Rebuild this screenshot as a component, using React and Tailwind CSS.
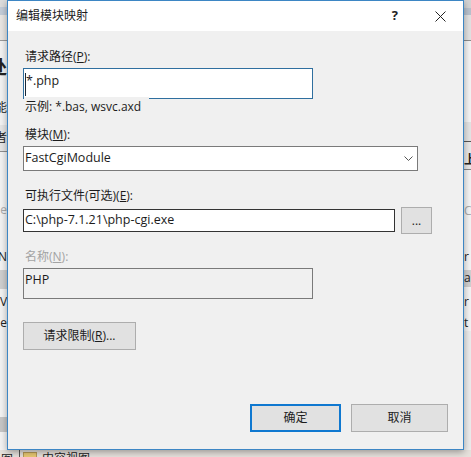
import React from 'react';

const Label = ({ text, hotkey, disabled, className = '' }) => (
  <div className={`h-[16px] leading-[16px] text-[12px] whitespace-nowrap ${disabled ? 'text-[#a3a3a3]' : 'text-[#1c1c1c]'} ${className}`}>
    {text}(<span className="underline">{hotkey}</span>):
  </div>
);

const WinButton = ({ children, primary, className = '' }) => (
  <button
    className={`flex items-center justify-center bg-[#e1e1e1] text-[12px] text-[#1c1c1c] ${primary ? 'border-2 border-[#0f78d0]' : 'border border-[#adadad]'} ${className}`}
  >
    {children}
  </button>
);

// slivers of the IIS manager window behind the dialog
const LeftStrip = () => (
  <div className="w-[7px] flex flex-col overflow-hidden bg-[#f3f3f3] text-[12px] leading-[16px] text-[#222]">
    <div className="h-[7px] shrink-0 bg-[#dcdcdc]" />
    <div className="h-[8px] shrink-0 bg-[#c3ccd8]" />
    <div className="h-[26px] shrink-0 bg-[#e9e6e3] border-b border-[#9a9a9a]" />
    <div className="h-[17px] shrink-0" />
    <div className="h-[18px] shrink-0 flex justify-end text-[18px] leading-[18px] font-bold"><span>处</span></div>
    <div className="h-[24px] shrink-0" />
    <div className="h-[16px] shrink-0 flex justify-end"><span>能</span></div>
    <div className="h-[9px] shrink-0" />
    <div className="h-[27px] shrink-0 flex justify-end items-center bg-[#e6e6e6] border-b border-[#8f8f8f]"><span>者</span></div>
    <div className="h-[50px] shrink-0" />
    <div className="h-[16px] shrink-0 flex justify-end text-[#aaa]"><span>e</span></div>
    <div className="h-[31px] shrink-0" />
    <div className="h-[16px] shrink-0 flex justify-end"><span>N</span></div>
    <div className="h-[5px] shrink-0" />
    <div className="h-[19px] shrink-0 bg-[#cfcfcf]" />
    <div className="h-[5px] shrink-0" />
    <div className="h-[16px] shrink-0 flex"><span>V</span></div>
    <div className="h-[5px] shrink-0" />
    <div className="h-[16px] shrink-0 flex justify-end"><span>e</span></div>
    <div className="h-[86px] shrink-0" />
    <div className="h-[15px] shrink-0 bg-[#c6c6c6]" />
    <div className="flex-1" />
  </div>
);

const RightStrip = () => (
  <div className="w-[7px] flex flex-col overflow-hidden bg-[#f4f4f4] text-[12px] leading-[16px] text-[#222]">
    <div className="h-[8px] shrink-0 bg-[#d4d4d4]" />
    <div className="h-[7px] shrink-0 bg-[#b9c2ce]" />
    <div className="h-[26px] shrink-0 bg-[#e2e2e2] border-b border-[#8c8c8c]" />
    <div className="h-[81px] shrink-0" />
    <div className="h-[20px] shrink-0 bg-[#e4e4e4] border-b border-[#555]" />
    <div className="h-[28px] shrink-0 flex items-end pb-[1px] bg-[#e8e8e8] border-b border-[#888] font-bold"><span>上</span></div>
    <div className="h-[33px] shrink-0" />
    <div className="h-[16px] shrink-0 text-[#aaa]"><span>C</span></div>
    <div className="h-[30px] shrink-0" />
    <div className="h-[16px] shrink-0"><span>r</span></div>
    <div className="h-[5px] shrink-0" />
    <div className="h-[17px] shrink-0 bg-[#d0d0d0]"><span>a</span></div>
    <div className="h-[7px] shrink-0" />
    <div className="h-[16px] shrink-0"><span>r</span></div>
    <div className="h-[5px] shrink-0" />
    <div className="h-[16px] shrink-0"><span>t</span></div>
    <div className="flex-1 bg-[#ececec]" />
  </div>
);

const BottomStrip = () => (
  <div className="h-[7px] flex items-start overflow-hidden bg-[#e6e1dc] text-[12px] leading-[14px] text-[#222]">
    <div className="w-[20px] h-full flex justify-end pr-[6px] pt-[3px] border-r border-[#555]"><span>图</span></div>
    <div className="ml-[3px] mt-[2px] w-[14px] h-[7px] bg-[#e8c872] border border-[#b59a58]" />
    <span className="ml-[5px] mt-[2px]">内容视图</span>
  </div>
);

export default function App() {
  return (
    <div
      className="relative w-[471px] h-[457px] overflow-hidden flex flex-col bg-[#f0f0f0]"
      style={{ fontFamily: '"Open Sans", "Noto Sans CJK SC", sans-serif' }}
    >
      <div className="flex flex-1">
        <LeftStrip />
        <div className="flex-1" />
        <RightStrip />
      </div>
      <BottomStrip />

      {/* dialog */}
      <div className="absolute left-[7px] top-0 w-[457px] h-[450px] flex flex-col bg-[#f0f0f0] border border-[#3d86c4] shadow-[0_2px_7px_rgba(0,0,0,0.35)]">
        <div className="h-[30px] shrink-0 flex items-center bg-white">
          <span className="ml-[8px] text-[12px] text-[#1c1c1c]">编辑模块映射</span>
          <span className="ml-auto text-[13px] font-bold text-[#222] mr-[37px]">?</span>
          <svg width="11" height="11" viewBox="0 0 11 11" className="mr-[17px]">
            <path d="M0.5 0.5L10.5 10.5M10.5 0.5L0.5 10.5" stroke="#222" strokeWidth="1" fill="none" />
          </svg>
        </div>

        <div className="flex-1 flex flex-col pl-[15px] pt-[18px] pr-[15px]">
          <Label text="请求路径" hotkey="P" className="ml-[2px]" />
          <div className="mt-[3px] w-[290px] h-[31px] flex items-start bg-white border border-[#2f6f9f]">
            <span className="mt-[4px] ml-[1px] w-px h-[23px] bg-[#1a2a3a]" />
            <span className="mt-[2px] text-[12.5px] leading-[19px] text-[#1c1c1c]">*.php</span>
          </div>
          <div className="relative -mt-[2px] ml-[1px] w-[125px] h-[18px] pl-[1px] pt-px bg-[#f0f0f0] text-[12px] leading-[18px] text-[#1c1c1c] whitespace-nowrap">
            示例: *.bas, wsvc.axd
          </div>

          <Label text="模块" hotkey="M" className="mt-[12px] ml-[2px]" />
          <div className="mt-[3px] w-[395px] h-[25px] flex items-center justify-between bg-white border border-[#7a7a7a]">
            <span className="ml-[1px] text-[12.5px] text-[#1c1c1c]">FastCgiModule</span>
            <svg width="9" height="6" viewBox="0 0 9 6" className="mr-[4px]">
              <path d="M0.5 0.5L4.5 4.5L8.5 0.5" stroke="#555" strokeWidth="1" fill="none" />
            </svg>
          </div>

          <Label text="可执行文件(可选)" hotkey="E" className="mt-[17px] ml-[2px]" />
          <div className="mt-[3px] flex items-center">
            <div className="w-[372px] h-[23px] flex items-center bg-white border border-[#333]">
              <span className="ml-[1px] text-[12.5px] text-[#1c1c1c]">C:\php-7.1.21\php-cgi.exe</span>
            </div>
            <WinButton className="ml-[6px] w-[31px] h-[27px]">...</WinButton>
          </div>

          <Label text="名称" hotkey="N" disabled className="mt-[15px] ml-[2px]" />
          <div className="mt-[3px] w-[290px] h-[31px] flex items-start bg-[#f0f0f0] border border-[#7a7a7a]">
            <span className="ml-[1px] mt-[2px] text-[12.5px] leading-[18px] text-[#1c1c1c]">PHP</span>
          </div>

          <WinButton className="mt-[23px] w-[113px] h-[28px]">
            请求限制(<span className="underline">R</span>)...
          </WinButton>

          <div className="mt-auto mb-[17px] flex justify-end gap-[10px]">
            <WinButton primary className="w-[91px] h-[28px]">确定</WinButton>
            <WinButton className="w-[97px] h-[28px]">取消</WinButton>
          </div>
        </div>
      </div>
    </div>
  );
}
